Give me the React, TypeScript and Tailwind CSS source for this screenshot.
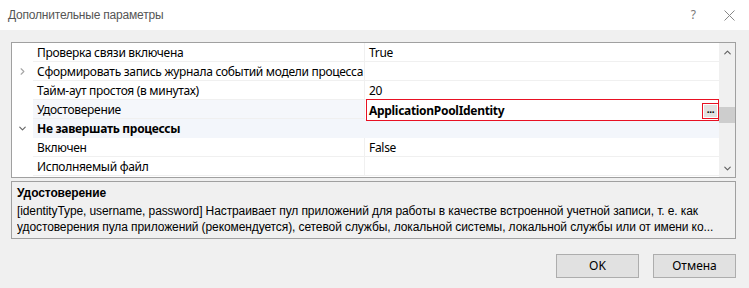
import { ChevronDown, ChevronRight, ChevronUp } from "lucide-react";

type Row = {
	name: string;
	value?: string;
	kind?: "collapsed" | "category" | "selected";
};

const rows: Row[] = [
	{ name: "Проверка связи включена", value: "True" },
	{ name: "Сформировать запись журнала событий модели процесса", kind: "collapsed" },
	{ name: "Тайм-аут простоя (в минутах)", value: "20" },
	{ name: "Удостоверение", value: "ApplicationPoolIdentity", kind: "selected" },
	{ name: "Не завершать процессы", kind: "category" },
	{ name: "Включен", value: "False" },
	{ name: "Исполняемый файл" },
];

function GridRow({ row }: { row: Row }) {
	if (row.kind === "category") {
		return (
			<div className="flex h-[19px]">
				<div className="w-[21px] flex items-center justify-center text-[#666]">
					<ChevronDown size={11} strokeWidth={2.5} />
				</div>
				<div className="flex-1 bg-[#f3f6fb] pl-[4px] pt-px flex items-center font-bold">
					{row.name}
				</div>
			</div>
		);
	}

	const selected = row.kind === "selected";

	return (
		<div className="flex h-[19px]">
			<div className="w-[21px] flex items-center justify-center text-[#a6a6a6]">
				{row.kind === "collapsed" && <ChevronRight size={11} strokeWidth={2.5} />}
			</div>
			<div
				className={`w-[331px] pl-[4px] pt-px flex items-center border-b border-[#f0f0f0] whitespace-nowrap overflow-hidden ${
					selected ? "bg-[#f5f7fb]" : ""
				}`}
			>
				{row.name}
			</div>
			<div className="w-px bg-[#f0f0f0]" />
			{selected ? (
				<div className="flex-1 relative">
					<div className="absolute left-[1px] right-0 top-[-1px] h-[22px] border border-[#e81123] bg-white flex items-center pl-[2px] pt-px font-bold z-10">
						<span className="flex-1">{row.value}</span>
						<div className="w-[17px] h-[16px] border border-[#e81123] mr-[-1px] p-px">
							<div className="w-full h-full bg-[#e1e1e1] text-[10px] leading-[9px] text-center">
								...
							</div>
						</div>
					</div>
				</div>
			) : (
				<div className="flex-1 pl-[4px] pt-px flex items-center border-b border-[#f0f0f0]">
					{row.value}
				</div>
			)}
		</div>
	);
}

export default function App() {
	return (
		<div
			className="w-[749px] h-[288px] bg-[#f0f0f0] flex flex-col text-[12px] text-black"
			style={{ fontFamily: '"Noto Sans", "Liberation Sans", sans-serif' }}
		>
			<div className="h-[30px] bg-white flex items-center pl-[8px] pr-[10px] text-[#555]">
				<span className="flex-1 font-['Liberation_Sans',sans-serif] tracking-[-0.2px]">
					Дополнительные параметры
				</span>
				<span className="text-[#777] mr-[28px]">?</span>
				<svg width="11" height="11" viewBox="0 0 11 11" className="mr-[4px]">
					<path d="M0.5 0.5 L10.5 10.5 M10.5 0.5 L0.5 10.5" stroke="#888" strokeWidth="1" />
				</svg>
			</div>

			<div className="pl-[11px] pr-[13px] pt-[12px]">
				<div className="h-[136px] border border-[#a0a0a0] bg-white flex tracking-[-0.3px]">
					<div className="flex-1 flex flex-col">
						{rows.map((r) => (
							<GridRow key={r.name} row={r} />
						))}
					</div>
					<div className="w-[16px] bg-[#f0f0f0] flex flex-col items-center text-[#606060]">
						<div className="h-[18px] flex items-center">
							<ChevronUp size={11} strokeWidth={2.5} />
						</div>
						<div className="flex-1 w-full pt-[46px]">
							<div className="h-[16px] w-full bg-[#cdcdcd]" />
						</div>
						<div className="h-[18px] flex items-center">
							<ChevronDown size={11} strokeWidth={2.5} />
						</div>
					</div>
				</div>

				<div className="mt-[3px] h-[58px] border border-[#a0a0a0] pl-[5px] pt-[3px] leading-[16px] font-['Liberation_Sans',sans-serif] tracking-[-0.1px]">
					<div className="font-bold mb-[2px]">Удостоверение</div>
					<div className="whitespace-nowrap overflow-hidden">
						[identityType, username, password] Настраивает пул приложений для работы в качестве встроенной учетной записи, т. е. как
					</div>
					<div className="whitespace-nowrap overflow-hidden">
						удостоверения пула приложений (рекомендуется), сетевой службы, локальной системы, локальной службы или от имени ко...
					</div>
				</div>
			</div>

			<div className="flex justify-end gap-[14px] pr-[13px] pt-[15px]">
				<button className="w-[83px] h-[24px] bg-[#e1e1e1] border border-[#adadad]">OK</button>
				<button className="w-[83px] h-[24px] bg-[#e1e1e1] border border-[#adadad]">Отмена</button>
			</div>
		</div>
	);
}
